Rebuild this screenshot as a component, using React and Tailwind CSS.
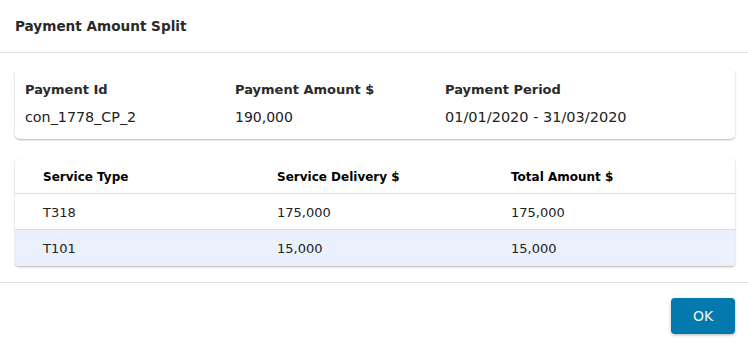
import React from "react";

const rows = [
  { type: "T318", delivery: "175,000", total: "175,000" },
  { type: "T101", delivery: "15,000", total: "15,000" },
];

const App = () => {
  return (
    <div className="w-[748px] h-[346px] bg-white font-['DejaVu_Sans',sans-serif] text-[#222]">
      {/* Header */}
      <div className="h-[53px] border-b border-[#e0e0e0] px-[15px] flex items-center">
        <h1 className="text-[13.6px] font-bold text-[#2a2a2a]">Payment Amount Split</h1>
      </div>

      <div className="pl-[15px] pr-[13px] pt-[16px] pb-[16px]">
        {/* Payment summary */}
        <div className="rounded-[5px] bg-white shadow-[0_1px_2px_rgba(0,0,0,0.3)] h-[70px] pl-[10px] pt-[12px] grid grid-cols-[210px_210px_1fr]">
          <div>
            <div className="text-[13px] font-bold text-[#2a2a2a] leading-[17px]">Payment Id</div>
            <div className="text-[14.3px] mt-[11px] leading-[17px]">con_1778_CP_2</div>
          </div>
          <div>
            <div className="text-[13px] font-bold text-[#2a2a2a] leading-[17px]">Payment Amount $</div>
            <div className="text-[14px] mt-[11px] leading-[17px]">190,000</div>
          </div>
          <div>
            <div className="text-[13px] font-bold text-[#2a2a2a] leading-[17px]">Payment Period</div>
            <div className="text-[14.5px] mt-[11px] leading-[17px]">01/01/2020 - 31/03/2020</div>
          </div>
        </div>

        {/* Service table */}
        <div className="mt-[20px] rounded-[4px] bg-white shadow-[0_1px_2px_rgba(0,0,0,0.3)] overflow-hidden">
          <div className="h-[35px] grid grid-cols-[234px_234px_1fr] pl-[28px] pt-[1px] items-center border-b border-[#dcdcdc] text-[12px] font-bold text-black">
            <div>Service Type</div>
            <div>Service Delivery $</div>
            <div>Total Amount $</div>
          </div>
          {rows.map((row, i) => (
            <div
              key={row.type}
              className={`h-[36px] grid grid-cols-[234px_234px_1fr] pl-[28px] pt-[2px] items-center text-[13px] text-[#222] ${
                i === 0 ? "border-b border-[#dcdcdc]" : "bg-[#eaf1fc]"
              }`}
            >
              <div>{row.type}</div>
              <div>{row.delivery}</div>
              <div>{row.total}</div>
            </div>
          ))}
        </div>
      </div>

      {/* Footer */}
      <div className="border-t border-[#e0e0e0] px-[13px] pt-[15px] flex justify-end">
        <button className="w-[64px] h-[36px] rounded-[4px] bg-[#0479ad] text-[#eef6fa] text-[14px] shadow-[0_1px_3px_rgba(0,0,0,0.3)]">
          OK
        </button>
      </div>
    </div>
  );
};

export default App;
